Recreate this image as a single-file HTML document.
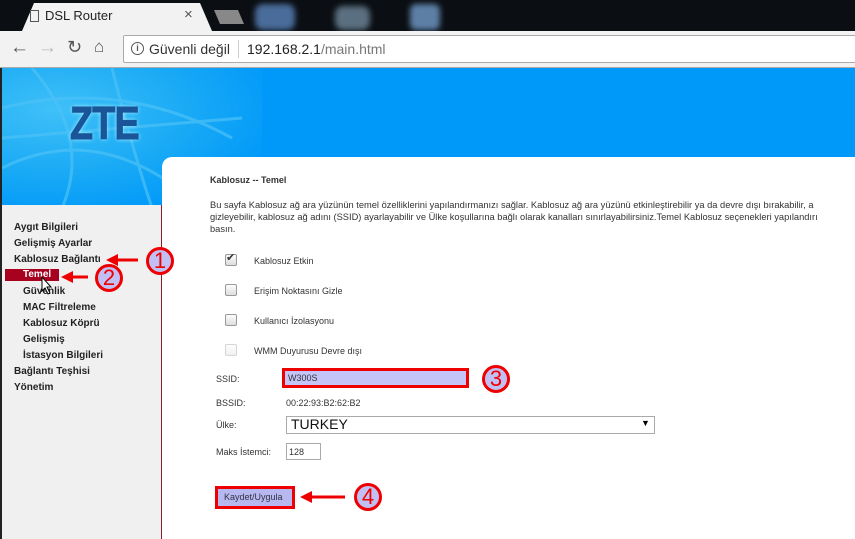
<!DOCTYPE html>
<html><head><meta charset="utf-8"><style>
*{margin:0;padding:0;box-sizing:border-box}
body{width:855px;height:539px;overflow:hidden;position:relative;font-family:"Liberation Sans","DejaVu Sans",sans-serif;background:#fff}
.abs{position:absolute}
.tabbar{left:0;top:0;width:855px;height:31px;background:#0b0f14}
.tab{left:22px;top:3px;width:190px;height:28px;background:#f2f2f2;clip-path:polygon(0 100%,12px 0,178px 0,190px 100%)}
.toolbar{left:0;top:31px;width:855px;height:37px;background:#f2f2f2;border-bottom:1px solid #aaa}
.addr{left:123px;top:35px;width:740px;height:28px;background:#fff;border:1px solid #aaa;border-radius:2px}
.banner{left:2px;top:68px;width:853px;height:140px;background:#0099fa}
.net{left:2px;top:68px;width:260px;height:140px;background:radial-gradient(ellipse at 20% 30%,#3fc0f8 0%,#1aaaf5 45%,#0099fa 80%)}
.side{left:2px;top:205px;width:160px;height:334px;background:#f0f0f0;border-right:1px solid #8a1f2c}
.main{left:162px;top:157px;width:693px;height:382px;background:#fff;border-top-left-radius:10px}
.menu{font-size:10px;font-weight:bold;color:#222;position:absolute;white-space:nowrap}
.t{font-size:9px;color:#333;position:absolute;white-space:nowrap}
.cb{position:absolute;width:12px;height:12px;border:1px solid #999;border-radius:2px;background:linear-gradient(#fdfdfd,#ddd)}
.circ{position:absolute;width:28px;height:28px;border:3px solid #e00;border-radius:50%;background:#c0c0f4;color:#e00;font-size:22px;text-align:center;line-height:22px}
</style></head><body>
<div class="abs tabbar"></div>
<div class="abs tab"></div>
<div class="abs" style="left:30px;top:10px;width:9px;height:12px;border:1px solid #555"></div>
<div class="abs" style="left:45px;top:8px;font-size:13px;color:#222">DSL Router</div>
<div class="abs" style="left:184px;top:6px;font-size:15px;color:#555">×</div>
<div class="abs" style="left:214px;top:10px;width:30px;height:14px;background:#888;clip-path:polygon(0 0,80% 0,100% 100%,20% 100%)"></div>
<div class="abs" style="left:255px;top:4px;width:40px;height:26px;background:#4a6c9a;border-radius:8px;filter:blur(3px)"></div>
<div class="abs" style="left:335px;top:6px;width:35px;height:24px;background:#5a6f80;border-radius:8px;filter:blur(3px)"></div>
<div class="abs" style="left:410px;top:4px;width:30px;height:26px;background:#5d7fa6;border-radius:6px;filter:blur(3px)"></div>
<div class="abs toolbar"></div>
<div class="abs" style="left:10px;top:37px;font-size:19px;color:#555">←</div>
<div class="abs" style="left:38px;top:37px;font-size:19px;color:#bbb">→</div>
<div class="abs" style="left:67px;top:37px;font-size:18px;color:#555">↻</div>
<div class="abs" style="left:94px;top:37px;font-size:17px;color:#555">⌂</div>
<div class="abs addr"></div>
<div class="abs" style="left:131px;top:42px;width:13px;height:13px;border:1.5px solid #555;border-radius:50%;font-size:9px;text-align:center;line-height:10px;color:#555;font-weight:bold">i</div>
<div class="abs" style="left:149px;top:41px;font-size:14px;color:#333">Güvenli değil</div>
<div class="abs" style="left:238px;top:40px;width:1px;height:18px;background:#ccc"></div>
<div class="abs" style="left:247px;top:41px;font-size:14px;color:#222">192.168.2.1<span style="color:#777">/main.html</span></div>
<div class="abs" style="left:0;top:68px;width:2px;height:471px;background:#222"></div>
<div class="abs banner"></div>
<div class="abs net"></div>
<svg class="abs" style="left:2px;top:68px" width="260" height="140"><g stroke="#4cc2f7" stroke-width="3" fill="none" opacity=".7"><path d="M0 40 Q120 10 230 70"/><path d="M0 100 Q100 50 200 140"/><path d="M30 0 Q90 70 60 140"/><path d="M110 0 Q130 80 150 140"/><path d="M0 70 L240 50"/></g></svg>
<div class="abs" style="left:70px;top:96px;font-size:46px;font-weight:bold;color:#1a5499;letter-spacing:-1px;transform:scaleX(.82);transform-origin:left;text-shadow:0 0 5px #bff;-webkit-text-stroke:1px #1a5499">ZTE</div>
<div class="abs side"></div>
<div class="abs main"></div>
<div class="menu" style="left:14px;top:222px">Aygıt Bilgileri</div>
<div class="menu" style="left:14px;top:238px">Gelişmiş Ayarlar</div>
<div class="menu" style="left:14px;top:254px">Kablosuz Bağlantı</div>
<div class="abs" style="left:5px;top:269px;width:54px;height:12px;background:#a8001f"></div>
<div class="menu" style="left:23px;top:269px;color:#fff">Temel</div>
<div class="menu" style="left:23px;top:286px">Güvenlik</div>
<div class="menu" style="left:23px;top:302px">MAC Filtreleme</div>
<div class="menu" style="left:23px;top:318px">Kablosuz Köprü</div>
<div class="menu" style="left:23px;top:334px">Gelişmiş</div>
<div class="menu" style="left:23px;top:350px">İstasyon Bilgileri</div>
<div class="menu" style="left:14px;top:366px">Bağlantı Teşhisi</div>
<div class="menu" style="left:14px;top:382px">Yönetim</div>
<svg class="abs" style="left:40px;top:276px" width="14" height="20"><path d="M2 1 L2 15 L5 12 L8 18 L10 17 L7 11 L11 11 Z" fill="#fff" stroke="#000"/></svg>
<div class="t" style="left:210px;top:175px;font-weight:bold">Kablosuz -- Temel</div>
<div class="t" style="left:210px;top:199px;line-height:12px;font-size:9.3px">Bu sayfa Kablosuz ağ ara yüzünün temel özelliklerini yapılandırmanızı sağlar. Kablosuz ağ ara yüzünü etkinleştirebilir ya da devre dışı bırakabilir, a<br>gizleyebilir, kablosuz ağ adını (SSID) ayarlayabilir ve Ülke koşullarına bağlı olarak kanalları sınırlayabilirsiniz.Temel Kablosuz seçenekleri yapılandırı<br>basın.</div>
<div class="cb" style="left:225px;top:254px"></div><div class="abs" style="left:226px;top:251px;font-size:11px;color:#333">✔</div>
<div class="t" style="left:254px;top:256px">Kablosuz Etkin</div>
<div class="cb" style="left:225px;top:284px"></div>
<div class="t" style="left:254px;top:286px">Erişim Noktasını Gizle</div>
<div class="cb" style="left:225px;top:314px"></div>
<div class="t" style="left:254px;top:316px">Kullanıcı İzolasyonu</div>
<div class="cb" style="left:225px;top:344px;opacity:.4"></div>
<div class="t" style="left:254px;top:346px">WMM Duyurusu Devre dışı</div>
<div class="t" style="left:216px;top:374px">SSID:</div>
<div class="abs" style="left:282px;top:368px;width:187px;height:20px;border:3px solid #e00;background:#c4c4f8"></div>
<div class="t" style="left:288px;top:373px">W300S</div>
<div class="t" style="left:216px;top:398px">BSSID:</div>
<div class="t" style="left:286px;top:398px">00:22:93:B2:62:B2</div>
<div class="t" style="left:216px;top:420px">Ülke:</div>
<div class="abs" style="left:286px;top:416px;width:369px;height:18px;border:1px solid #aaa"></div>
<div class="abs" style="left:291px;top:416px;font-size:14px;color:#111">TURKEY</div>
<div class="abs" style="left:641px;top:418px;font-size:9px">▼</div>
<div class="t" style="left:216px;top:447px">Maks İstemci:</div>
<div class="abs" style="left:286px;top:443px;width:35px;height:17px;border:1px solid #aaa"></div>
<div class="t" style="left:289px;top:447px">128</div>
<div class="abs" style="left:215px;top:486px;width:80px;height:23px;border:3px solid #e00;background:#b8b8f0"></div>
<div class="t" style="left:224px;top:492px;color:#334">Kaydet/Uygula</div>
<svg class="abs" style="left:0;top:0" width="855" height="539">
<g stroke="#e00" stroke-width="3" fill="#e00">
<line x1="110" y1="260" x2="138" y2="260"/><path d="M106 260 L118 254 L118 266Z" stroke="none"/>
<line x1="65" y1="277" x2="88" y2="277"/><path d="M61 277 L73 271 L73 283Z" stroke="none"/>
<line x1="305" y1="497" x2="345" y2="497"/><path d="M300 497 L312 491 L312 503Z" stroke="none"/>
</g></svg>
<div class="circ" style="left:146px;top:247px">1</div>
<div class="circ" style="left:95px;top:264px">2</div>
<div class="circ" style="left:482px;top:365px">3</div>
<div class="circ" style="left:354px;top:483px">4</div>
</body></html>
